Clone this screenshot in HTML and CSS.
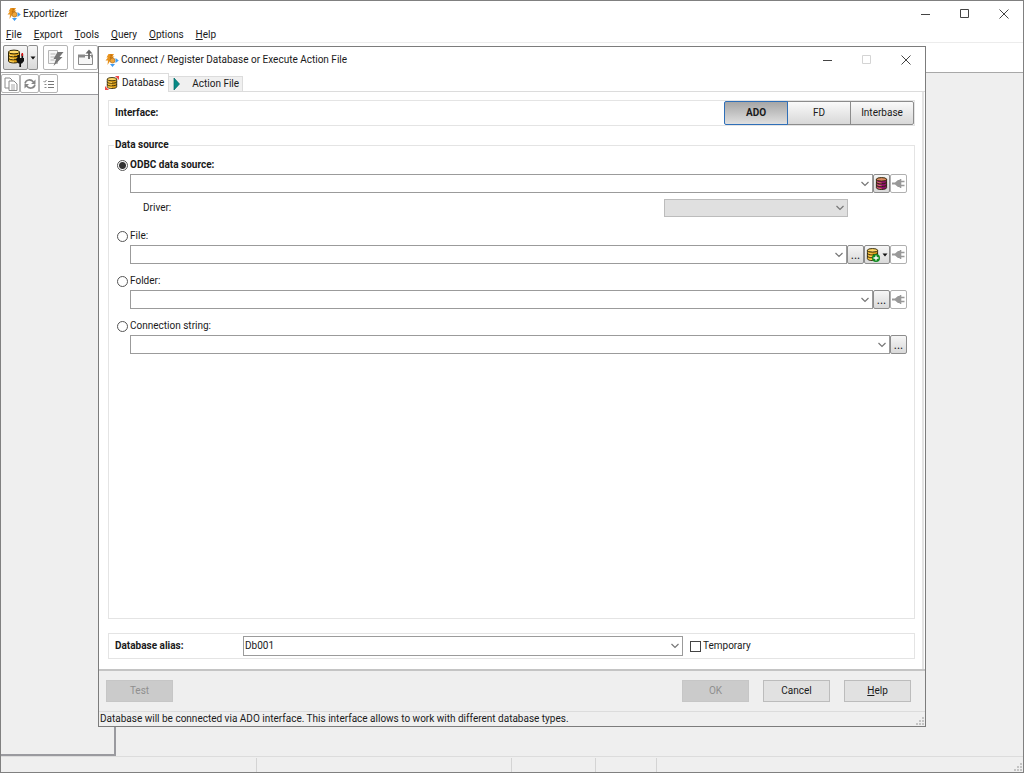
FILE: index.html
```html
<!DOCTYPE html>
<html lang="en">
<head>
<meta charset="utf-8">
<title>Exportizer</title>
<link rel="stylesheet" href="styles.css">
</head>
<body>
<svg class="defs" aria-hidden="true">
  <symbol id="logo" viewBox="0 0 14 14">
    <path d="M3.500 1h5.500L7.500 3.500h2L6 6.500 2.500 12l.5-4.500H.5L3 4.500H1.500z" fill="#e8921c"/>
    <path d="M5 2h2L5 5h3L5 7" fill="none" stroke="#b9690a" stroke-width=".8"/>
    <circle cx="7.500" cy="7.500" r="2.500" fill="#f0a63a" stroke="#a86b20" stroke-width=".7"/>
    <path d="M10.500 5l3.300 2.500-3.300 2.500zM5 11h5l-2.500 3z" fill="#3f9bf0"/>
  </symbol>
  <symbol id="db" viewBox="0 0 14 14">
    <path d="M1.500 2.500v9c0 2.600 11 2.600 11 0v-9z" fill="currentColor" stroke="#2c2408"/>
    <ellipse cx="7" cy="2.500" rx="5.500" ry="1.900" class="db-top" stroke="#2c2408"/>
    <path d="M1.500 5.500c0 2.300 11 2.300 11 0M1.500 8.500c0 2.300 11 2.300 11 0" fill="none" stroke="#2c2408"/>
    <path d="M2 5c1 1 3 1.400 5 1.400M2 8c1 1 3 1.400 5 1.400M2 11c1 1 3 1.400 5 1.400" class="db-shine" fill="none" stroke-width="1"/>
  </symbol>
  <symbol id="plug" viewBox="0 0 13 11">
    <path d="M0 4.500h3l3-2.500h2v7H6L3 6.500H0z" fill="#999"/>
    <path d="M8.500 1v9M9 3.500h3.500M9 7.500h3.500" stroke="#999" stroke-width="1.600" fill="none"/>
  </symbol>
  <symbol id="min" viewBox="0 0 10 10"><path d="M0 5.500h9" stroke="currentColor"/></symbol>
  <symbol id="max" viewBox="0 0 10 10"><path d="M.5 .5h8v8h-8z" fill="none" stroke="currentColor"/></symbol>
  <symbol id="close" viewBox="0 0 10 10"><path d="M.5 .5l9 9M9.500 .5l-9 9" stroke="currentColor"/></symbol>
  <symbol id="down" viewBox="0 0 6 4"><path d="M.5 .5h5L3 3.500z" fill="#111"/></symbol>
  <symbol id="grip" viewBox="0 0 8 8"><path d="M6 0h2v2H6zM3 3h2v2H3zM6 3h2v2H6zM0 6h2v2H0zM3 6h2v2H3zM6 6h2v2H6z" fill="#c4c4c4"/></symbol>
</svg>

<div class="window">
  <header class="titlebar">
    <svg class="logo"><use href="#logo"/></svg>
    <span class="title">Exportizer</span>
    <div class="captions">
      <button aria-label="Minimize"><svg><use href="#min"/></svg></button>
      <button aria-label="Maximize"><svg><use href="#max"/></svg></button>
      <button aria-label="Close"><svg><use href="#close"/></svg></button>
    </div>
  </header>
  <nav class="menu">
    <button><u>F</u>ile</button>
    <button><u>E</u>xport</button>
    <button><u>T</u>ools</button>
    <button><u>Q</u>uery</button>
    <button><u>O</u>ptions</button>
    <button><u>H</u>elp</button>
  </nav>
  <div class="toolbar">
    <div class="split">
      <button class="tool shaded" aria-label="Connect database">
        <svg class="ic18" viewBox="0 0 18 18">
          <use href="#db" width="14" height="15" class="gold"/>
          <path d="M9.500 9H17v3l-2 2.500h-3.500L9.500 12z" fill="#111"/>
          <path d="M13.200 14v4M11.200 6v3M15.300 5v4" stroke="#111" stroke-width="1.700"/>
          <path d="M15.300 4v3" stroke="#d11" stroke-width="1.500"/>
        </svg>
      </button>
      <button class="drop shaded" aria-label="Connect options"><svg class="arrow"><use href="#down"/></svg></button>
    </div>
    <button class="tool" aria-label="Execute">
      <svg class="ic18" viewBox="0 0 18 18">
        <path d="M1.500 1.500h9v13h-9z" fill="#f6f6f6" stroke="#b5b5b5"/>
        <path d="M3.500 5h5M3.500 8h5M3.500 11h4" stroke="#b5b5b5"/>
        <path d="M10.500 3h6l-4 5h3L6.500 17 9 10H6.500z" fill="#757575"/>
      </svg>
    </button>
    <button class="tool" aria-label="Export table">
      <svg class="ic18" viewBox="0 0 18 18">
        <path d="M1.500 6.500h14v9h-14z" fill="#f6f6f6" stroke="#8a8a8a"/>
        <path d="M1 5.500h7v3H1zM14 5.500h2v3h-2z" fill="#8a8a8a"/>
        <path d="M12 10V3" stroke="#666" stroke-width="1.800"/>
        <path d="M8.500 4.500L12 .5l3.500 4z" fill="#666"/>
      </svg>
    </button>
  </div>
  <div class="workspace">
    <aside class="side">
      <div class="minibar">
        <button aria-label="Copy"><svg viewBox="0 0 14 14"><path d="M1 1h5l2 2v8H1z" fill="#fff" stroke="#8a8a8a"/><path d="M5 4h5l3 3v6.500H5z" fill="#fff" stroke="#8a8a8a"/><path d="M7 8h4M7 10h4M7 12h4" stroke="#aaa"/></svg></button>
        <button aria-label="Refresh"><svg viewBox="0 0 14 14"><path d="M2 6.500C3 2 8 2 10.500 5M12 7.500C11 12 6 12 3.500 9" fill="none" stroke="#858585" stroke-width="1.600"/><path d="M12.500 2.500V7H8zM1.500 11.500V7H6z" fill="#858585"/></svg></button>
        <button aria-label="Select list"><svg viewBox="0 0 14 14"><path d="M6 4.500h6M6 7.500h6M6 10.500h6" stroke="#777"/><path d="M1.500 4l1.200 1.200L4.500 3M2.500 7.500h2M2.500 10.500h2" fill="none" stroke="#888"/></svg></button>
      </div>
      <div class="tree"></div>
    </aside>
    <main class="desk"></main>
  </div>
  <footer class="statusbar">
    <span class="cell wide"></span><span class="cell wide"></span><span class="cell narrow"></span><span class="cell narrow last"></span>
    <svg class="grip"><use href="#grip"/></svg>
  </footer>
</div>

<section class="dialog" role="dialog" aria-labelledby="dialog-title">
  <header class="titlebar dialog-titlebar">
    <svg class="logo"><use href="#logo"/></svg>
    <span class="title" id="dialog-title">Connect / Register Database or Execute Action File</span>
    <div class="captions">
      <button aria-label="Minimize"><svg><use href="#min"/></svg></button>
      <button aria-label="Maximize" disabled><svg><use href="#max"/></svg></button>
      <button aria-label="Close"><svg><use href="#close"/></svg></button>
    </div>
  </header>
  <div class="tabs" role="tablist">
    <button class="tab active" role="tab" aria-selected="true">
      <svg class="ic14 gold" viewBox="0 0 14 14"><path d="M10 0h4v4zM0 10v4h4z" fill="#f04a4a"/><use href="#db" x="1" y="1" width="12" height="12"/></svg>
      Database
    </button>
    <button class="tab" role="tab" aria-selected="false">
      <svg class="ic14" viewBox="0 0 14 14"><path d="M2 1l5.500 6L2 13z" fill="#078a86" stroke="#056a68" stroke-width=".7"/></svg>
      Action File
    </button>
    <span class="tabline"></span>
  </div>
  <div class="page">
    <div class="box interface">
      <b>Interface:</b>
      <div class="segments">
        <button class="on">ADO</button><button>FD</button><button>Interbase</button>
      </div>
    </div>
    <fieldset class="source">
      <legend>Data source</legend>
      <div class="option">
        <label class="pick strong"><input type="radio" name="src" checked> ODBC data source:</label>
        <div class="field">
          <select aria-label="ODBC data source"><option></option></select>
          <button class="mini shaded" aria-label="ODBC administrator"><svg class="ic13 purple"><use href="#db"/></svg></button>
          <button class="mini" aria-label="Test connection" disabled><svg class="plug"><use href="#plug"/></svg></button>
        </div>
        <div class="driver">
          <label for="driver">Driver:</label>
          <select id="driver" disabled><option></option></select>
        </div>
      </div>
      <div class="option">
        <label class="pick"><input type="radio" name="src"> File:</label>
        <div class="field">
          <select aria-label="File"><option></option></select>
          <button class="mini shaded dots">...</button>
          <button class="mini shaded add" aria-label="Create database">
            <svg class="ic14 gold" viewBox="0 0 14 14"><use href="#db" width="13" height="13"/><circle cx="10" cy="10" r="4" fill="#128c22"/><path d="M7.500 10h5M10 7.500v5" stroke="#fff" stroke-width="1.300"/></svg>
            <svg class="arrow"><use href="#down"/></svg>
          </button>
          <button class="mini" aria-label="Test file" disabled><svg class="plug"><use href="#plug"/></svg></button>
        </div>
      </div>
      <div class="option">
        <label class="pick"><input type="radio" name="src"> Folder:</label>
        <div class="field">
          <select aria-label="Folder"><option></option></select>
          <button class="mini shaded dots">...</button>
          <button class="mini" aria-label="Test folder" disabled><svg class="plug"><use href="#plug"/></svg></button>
        </div>
      </div>
      <div class="option">
        <label class="pick"><input type="radio" name="src"> Connection string:</label>
        <div class="field">
          <select aria-label="Connection string"><option></option></select>
          <button class="mini shaded dots">...</button>
        </div>
      </div>
    </fieldset>
    <div class="box alias">
      <label class="alias-label" for="alias">Database alias:</label>
      <select id="alias"><option>Db001</option></select>
      <label class="temporary"><input type="checkbox"> Temporary</label>
    </div>
  </div>
  <div class="actions">
    <button class="push" disabled>Test</button>
    <span class="spacer"></span>
    <button class="push" disabled>OK</button>
    <button class="push">Cancel</button>
    <button class="push"><u>H</u>elp</button>
  </div>
  <footer class="hint">
    <span>Database will be connected via ADO interface. This interface allows to work with different database types.</span>
    <svg class="grip"><use href="#grip"/></svg>
  </footer>
</section>
</body>
</html>
```
FILE: styles.css
```css
* { box-sizing: border-box; }

body {
  margin: 0;
  color: #1a1a1a;
  font: 10px/14px Roboto, sans-serif;
}

button, select, input { font: inherit; color: inherit; margin: 0; }
button { padding: 0; border: 0; background: none; white-space: nowrap; }
svg { display: block; flex: none; }
.defs { position: absolute; width: 0; height: 0; }

/* Main window */
.window {
  display: flex;
  flex-direction: column;
  height: 100vh;
  border: 1px solid #808080;
  background: #fff;
}

.titlebar {
  display: flex;
  align-items: center;
  flex: none;
  height: 26px;
  padding-left: 6px;
}
.logo { width: 14px; height: 14px; margin-right: 2px; }
.title { flex: 1; }
.captions { display: flex; }
.captions button { display: grid; place-items: center; width: 39px; height: 24px; color: #444; }
.captions button:disabled { color: #d4d4d4; }
.captions svg { width: 10px; height: 10px; }

.menu {
  display: flex;
  gap: 12px;
  flex: none;
  height: 16px;
  padding-left: 5px;
  border-bottom: 1px solid #ececec;
}
.menu button { line-height: 16px; }

.toolbar {
  display: flex;
  gap: 5px;
  flex: none;
  height: 30px;
  padding: 2px;
  border-bottom: 1px solid #a8a8a8;
}
.split { display: flex; }
.tool, .drop {
  display: grid;
  place-items: center;
  width: 25px;
  height: 25px;
  border: 1px solid #b4b4b4;
  border-radius: 2px;
}
.drop { width: 10px; border-left: 0; }
.shaded { border-color: #8c8c8c; background: linear-gradient(#f6f6f6, #d9d9d9); }
.ic18 { width: 18px; height: 18px; }
.ic14 { width: 14px; height: 14px; }
.ic13 { width: 13px; height: 13px; }
.arrow { width: 6px; height: 4px; }
.gold { --light: #ffd968; color: #dca01a; }
.purple { --light: #d98b60; color: #90106c; }
.db-top { fill: var(--light); }
.db-shine { stroke: var(--light); }

.workspace { display: flex; flex: 1; min-height: 0; background: #efefef; }
.side { display: flex; flex-direction: column; width: 115px; }
.minibar { display: flex; height: 21px; padding-top: 1px; background: #fff; }
.minibar button {
  display: grid;
  place-items: center;
  width: 19px;
  height: 19px;
  border: 1px solid #b4b4b4;
  border-radius: 2px;
}
.minibar svg { width: 14px; height: 14px; }
.tree { flex: 1; border: 1px solid #9a9a9f; border-width: 1px 2px 2px 0; }
.desk { flex: 1; }

.statusbar {
  display: flex;
  align-items: flex-end;
  flex: none;
  height: 16px;
  border-top: 1px solid #dcdcdc;
  background: #efefef;
}
.cell { height: 14px; border-right: 1px solid #d4d4d4; }
.wide { flex: 0 0 25%; }
.narrow { width: 84px; }
.last { width: 61px; }
.grip { width: 8px; height: 8px; margin: 0 1px 1px auto; }

/* Dialog window, floating over the main window */
.dialog {
  position: absolute;
  inset: 46px 98px;
  display: flex;
  flex-direction: column;
  border: 1px solid #7c7c7c;
  background: #fff;
}

.tabs { display: flex; align-items: flex-end; flex: none; height: 19px; }
.tab {
  display: flex;
  align-items: center;
  gap: 6px;
  height: 16px;
  padding: 0 3px;
  border: 1px solid #dcdcdc;
  border-left: 0;
  background: #f0f0f0;
}
.tab.active { gap: 3px; height: 19px; padding: 0 4px 0 6px; border-bottom: 0; background: #fff; }
.tabline { flex: 1; border-bottom: 1px solid #dcdcdc; }

.page {
  display: flex;
  flex-direction: column;
  flex: 1;
  min-height: 0;
  margin-right: 1px;
  padding: 8px 7px 10px 9px;
  border-right: 2px solid #e4e4e4;
}
.box { display: flex; align-items: center; flex: none; height: 26px; border: 1px solid #e4e4e4; }
.interface { justify-content: space-between; padding-left: 6px; }
.segments { display: flex; }
.segments button {
  width: 64px;
  height: 24px;
  margin-left: -1px;
  border: 1px solid #8c8c8c;
  background: linear-gradient(#fafafa, #d8d8d8);
}
.segments button:first-child { border-radius: 2px 0 0 2px; }
.segments button:last-child { border-radius: 0 2px 2px 0; }
.segments .on {
  z-index: 1;
  border-color: #2f6fb8;
  background: linear-gradient(#a6a6a6, #e0e0e0);
  font-weight: bold;
}

.source {
  display: flex;
  flex-direction: column;
  flex: 1;
  gap: 8px;
  min-width: 0;
  margin: 12px 0 14px;
  padding: 4px 7px 0 8px;
  border: 1px solid #e4e4e4;
}
.source legend { margin-left: -3px; padding: 0 1px; font-weight: bold; }
.pick { display: flex; align-items: center; gap: 2px; width: max-content; height: 18px; }
.strong { font-weight: bold; }
.pick input {
  appearance: none;
  width: 11px;
  height: 11px;
  border: 1px solid #555;
  border-radius: 50%;
  background: #fff;
}
.pick input:checked { background: radial-gradient(circle, #333 3px, #fff 4px); }

select {
  appearance: none;
  flex: 1;
  min-width: 0;
  height: 19px;
  padding: 0 16px 0 1px;
  border: 1px solid #9b9b9b;
  border-radius: 0;
  background: #fff url("data:image/svg+xml,%3Csvg xmlns='http://www.w3.org/2000/svg' width='8' height='6'%3E%3Cpath d='M.5 1L4 4.500 7.500 1' fill='none' stroke='%23777' stroke-width='1.200'/%3E%3C/svg%3E") no-repeat right 3px center;
}
select:disabled { border-color: #bcbcbc; background-color: #e0e0e0; opacity: 1; }

.field { display: flex; padding-left: 13px; }
.mini {
  display: flex;
  align-items: center;
  justify-content: center;
  width: 17px;
  height: 19px;
  border: 1px solid #b0b0b0;
  border-radius: 2px;
}
.mini.shaded { border-color: #8c8c8c; }
.mini.dots { font-size: 12px; }
.mini.add { gap: 2px; width: 26px; }
.plug { width: 13px; height: 11px; }
.driver {
  display: flex;
  align-items: center;
  justify-content: space-between;
  margin: 6px 0 2px;
  padding: 0 59px 0 26px;
}
.driver select { flex: 0 0 184px; height: 18px; }

.alias { padding-left: 6px; }
.alias-label { width: 128px; font-weight: bold; }
.alias select { flex: 0 1 440px; height: 20px; }
.temporary { display: flex; align-items: center; gap: 2px; margin-left: 7px; }
.temporary input {
  appearance: none;
  width: 11px;
  height: 11px;
  border: 1px solid #444;
  background: #fff;
}

.actions {
  display: flex;
  align-items: center;
  gap: 14px;
  flex: none;
  height: 42px;
  padding: 0 14px 0 7px;
  border-top: 2px solid #c4c4c4;
  background: #efefef;
}
.spacer { flex: 1; }
.push { width: 67px; height: 22px; border: 1px solid #bcbcbc; background: #e1e1e1; }
.push:disabled { border-color: #c6c6c6; background: #cbcbcb; color: #8f8f8f; }

.hint {
  display: flex;
  align-items: center;
  flex: none;
  height: 15px;
  padding-left: 1px;
  border-top: 1px solid #dcdcdc;
  background: #efefef;
  line-height: 16px;
  white-space: nowrap;
}
.hint .grip { align-self: flex-end; }
```
